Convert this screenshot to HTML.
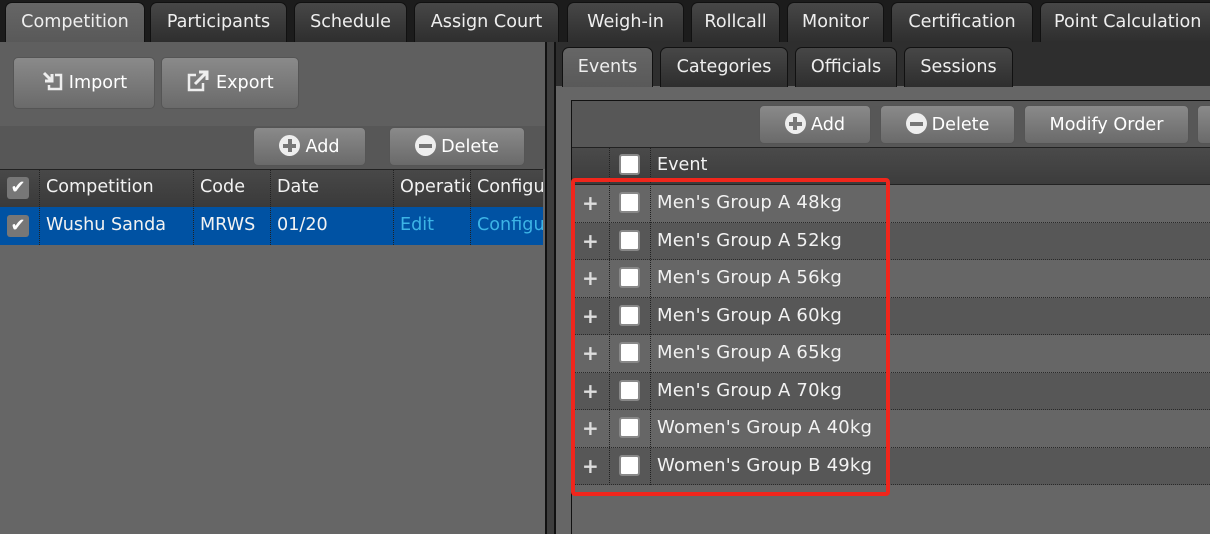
<!DOCTYPE html>
<html><head><meta charset="utf-8"><style>
*{box-sizing:border-box;margin:0;padding:0}
body{width:1210px;height:534px;overflow:hidden;background:#666;font-family:"DejaVu Sans","Liberation Sans",sans-serif;color:#f2f2f2;position:relative;font-size:17.6px}
.a{position:absolute}
.topbar{left:0;top:0;width:1210px;height:42px;background:#1c1c1c}
.tab{position:absolute;top:2px;height:40px;border:1px solid #111;border-bottom:none;border-radius:7px 7px 0 0;background:linear-gradient(#474747,#2e2e2e);color:#eee;text-align:center;line-height:38px;font-size:17.6px;white-space:nowrap;overflow:hidden}
.tab.on{background:linear-gradient(#666,#595959)}
.btn{position:absolute;border-radius:5px;background:linear-gradient(#8a8a8a,#6a6a6a);border:1px solid #555;color:#fff;font-size:17.6px;text-align:center;white-space:nowrap}
.ic{display:inline-block;width:21px;height:21px;border-radius:50%;background:#eee;position:relative;vertical-align:-4px;margin-right:5px}
.ic:before{content:"";position:absolute;left:4px;top:8.5px;width:13px;height:4px;background:#777}
.ic.p:after{content:"";position:absolute;left:8.5px;top:4px;width:4px;height:13px;background:#777}
.cb{position:absolute;width:21px;height:21px;background:#fff;border:2px solid #888;border-radius:3px}
.cbk{position:absolute;width:22px;height:22px;background:#777;border-radius:3px;color:#fff;font-size:18px;line-height:22px;text-align:center}
.vl{position:absolute;border-left:1px dotted #222}
.row{position:absolute;left:571px;width:639px;height:37.5px;border-bottom:1px dotted #2a2a2a}
.row span{position:absolute;left:86px;top:7px;font-size:18px;letter-spacing:0.2px}
.row b{position:absolute;left:11px;top:6px;font-size:20px;color:#ddd;font-weight:bold}
</style></head><body>
<div class="a topbar"></div>
<div class="tab on" style="left:5px;width:140px">Competition</div>
<div class="tab" style="left:150px;width:137px">Participants</div>
<div class="tab" style="left:294px;width:113px">Schedule</div>
<div class="tab" style="left:414px;width:145px">Assign Court</div>
<div class="tab" style="left:567px;width:117px">Weigh-in</div>
<div class="tab" style="left:691px;width:89px">Rollcall</div>
<div class="tab" style="left:787px;width:97px">Monitor</div>
<div class="tab" style="left:891px;width:142px">Certification</div>
<div class="tab" style="left:1040px;width:180px;text-align:left;padding-left:13px">Point Calculation</div>

<div class="a" style="left:0;top:42px;width:545px;height:84px;background:#5f5f5f"></div>
<div class="btn" style="left:13px;top:57px;width:142px;height:52px;line-height:50px">
<svg width="24" height="22" viewBox="0 0 24 22" style="vertical-align:-4px;margin-right:4px"><path d="M3 3l8 8M11 4v7H4" stroke="#eee" stroke-width="3" fill="none"/><path d="M14 5h6v14H8v-4" stroke="#eee" stroke-width="2.5" fill="none"/></svg>Import</div>
<div class="btn" style="left:161px;top:57px;width:138px;height:52px;line-height:50px">
<svg width="24" height="22" viewBox="0 0 24 22" style="vertical-align:-4px"><path d="M10 5H3v15h14v-7" stroke="#eee" stroke-width="2.5" fill="none"/><path d="M9 14L20 3M13 2h8v8" stroke="#eee" stroke-width="3" fill="none"/></svg> Export</div>
<div class="a" style="left:0;top:126px;width:545px;height:43px;background:#575757"></div>
<div class="btn" style="left:253px;top:127px;width:113px;height:39px;line-height:38px"><i class="ic p"></i>Add</div>
<div class="btn" style="left:389px;top:127px;width:136px;height:39px;line-height:38px"><i class="ic"></i>Delete</div>
<div class="a" style="left:0;top:169px;width:543px;height:38px;background:linear-gradient(#484848,#3a3a3a);border-top:1px solid #222"></div>
<div class="a" style="left:0;top:207px;width:543px;height:38px;background:#0052a3"></div>
<div class="cbk" style="left:7px;top:177px">✔</div>
<div class="cbk" style="left:7px;top:215px">✔</div>
<div class="vl" style="left:39px;top:169px;height:76px"></div>
<div class="vl" style="left:193px;top:169px;height:76px"></div>
<div class="vl" style="left:270px;top:169px;height:76px"></div>
<div class="vl" style="left:393px;top:169px;height:76px"></div>
<div class="vl" style="left:470px;top:169px;height:76px"></div>
<div class="a" style="left:46px;top:177px">Competition</div>
<div class="a" style="left:200px;top:177px">Code</div>
<div class="a" style="left:277px;top:177px">Date</div>
<div class="a" style="left:400px;top:177px;width:70px;overflow:hidden;white-space:nowrap">Operation</div>
<div class="a" style="left:477px;top:177px;width:66px;overflow:hidden;white-space:nowrap">Configure</div>
<div class="a" style="left:46px;top:215px">Wushu Sanda</div>
<div class="a" style="left:200px;top:215px">MRWS</div>
<div class="a" style="left:277px;top:215px">01/20</div>
<div class="a" style="left:400px;top:215px;color:#3cb4e6">Edit</div>
<div class="a" style="left:477px;top:215px;width:66px;overflow:hidden;white-space:nowrap;color:#3cb4e6">Configure</div>

<div class="a" style="left:545px;top:42px;width:2px;height:492px;background:#111"></div>
<div class="a" style="left:547px;top:42px;width:7px;height:492px;background:#3e3e3e"></div>
<div class="a" style="left:554px;top:42px;width:2px;height:492px;background:#111"></div>

<div class="a" style="left:556px;top:42px;width:654px;height:44px;background:#2e2e2e"></div>
<div class="tab on" style="left:562px;top:47px;width:91px">Events</div>
<div class="tab" style="left:660px;top:47px;width:128px">Categories</div>
<div class="tab" style="left:795px;top:47px;width:102px">Officials</div>
<div class="tab" style="left:904px;top:47px;width:109px">Sessions</div>
<div class="a" style="left:571px;top:100px;width:639px;height:434px;border-left:1px solid #111;border-top:1px solid #111;background:#666"></div>
<div class="a" style="left:572px;top:101px;width:638px;height:46px;background:#575757"></div>
<div class="btn" style="left:759px;top:105px;width:112px;height:39px;line-height:38px"><i class="ic p"></i>Add</div>
<div class="btn" style="left:880px;top:105px;width:135px;height:39px;line-height:38px"><i class="ic"></i>Delete</div>
<div class="btn" style="left:1024px;top:105px;width:165px;height:39px;line-height:38px">Modify Order</div>
<div class="btn" style="left:1197px;top:105px;width:40px;height:39px"></div>
<div class="a" style="left:572px;top:147px;width:638px;height:38px;background:linear-gradient(#4a4a4a,#3c3c3c);border-top:1px solid #222;border-bottom:1px solid #222"></div>
<div class="cb" style="left:619px;top:154px"></div>
<div class="a" style="left:657px;top:155px">Event</div>

<div class="row" style="top:185px;background:#666"><b>+</b><span>Men's Group A 48kg</span></div>
<div class="row" style="top:222.5px;background:#575757"><b>+</b><span>Men's Group A 52kg</span></div>
<div class="row" style="top:260px;background:#666"><b>+</b><span>Men's Group A 56kg</span></div>
<div class="row" style="top:297.5px;background:#575757"><b>+</b><span>Men's Group A 60kg</span></div>
<div class="row" style="top:335px;background:#666"><b>+</b><span>Men's Group A 65kg</span></div>
<div class="row" style="top:372.5px;background:#575757"><b>+</b><span>Men's Group A 70kg</span></div>
<div class="row" style="top:410px;background:#666"><b>+</b><span>Women's Group A 40kg</span></div>
<div class="row" style="top:447.5px;background:#575757"><b>+</b><span>Women's Group B 49kg</span></div>
<div class="cb" style="left:619px;top:192px"></div>
<div class="cb" style="left:619px;top:230px"></div>
<div class="cb" style="left:619px;top:267px"></div>
<div class="cb" style="left:619px;top:305px"></div>
<div class="cb" style="left:619px;top:342px"></div>
<div class="cb" style="left:619px;top:380px"></div>
<div class="cb" style="left:619px;top:417px"></div>
<div class="cb" style="left:619px;top:455px"></div>
<div class="vl" style="left:609px;top:147px;height:338px"></div>
<div class="vl" style="left:650px;top:147px;height:338px"></div>
<div class="a" style="left:571px;top:178px;width:319px;height:318px;border:4px solid #f0261c;border-radius:4px"></div>
</body></html>
